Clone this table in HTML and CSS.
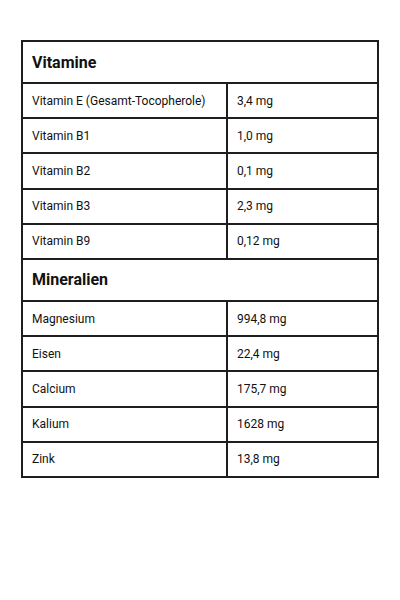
FILE: index.html
```html
<!DOCTYPE html>
<html lang="de">
<head>
<meta charset="utf-8">
<link rel="stylesheet" href="styles.css">
</head>
<body>
<div class="page">
<table class="nutri">
  <tr class="head"><th colspan="2">Vitamine</th></tr>
  <tr><td class="name">Vitamin E (Gesamt-Tocopherole)</td><td>3,4 mg</td></tr>
  <tr><td class="name">Vitamin B1</td><td>1,0 mg</td></tr>
  <tr><td class="name">Vitamin B2</td><td>0,1 mg</td></tr>
  <tr><td class="name">Vitamin B3</td><td>2,3 mg</td></tr>
  <tr><td class="name">Vitamin B9</td><td>0,12 mg</td></tr>
  <tr class="head"><th colspan="2">Mineralien</th></tr>
  <tr><td class="name">Magnesium</td><td>994,8 mg</td></tr>
  <tr><td class="name">Eisen</td><td>22,4 mg</td></tr>
  <tr><td class="name">Calcium</td><td>175,7 mg</td></tr>
  <tr><td class="name">Kalium</td><td>1628 mg</td></tr>
  <tr><td class="name">Zink</td><td>13,8 mg</td></tr>
</table>
</div>
</body>
</html>
```
FILE: styles.css
```css
html, body {
  margin: 0;
  padding: 0;
  background: #fff;
}
.page {
  padding: 40px 21px;
  font-family: Roboto, "Liberation Sans", sans-serif;
  color: #111;
}
.nutri {
  width: 358px;
  border-collapse: collapse;
}
.nutri th, .nutri td {
  border: 2px solid #1e1e1e;
  text-align: left;
  padding: 0 9px;
}
.nutri th {
  height: 40px;
  font-size: 16px;
  font-weight: 700;
}
.nutri td {
  height: 33.2px;
  font-size: 12px;
  font-weight: 400;
}
.nutri td.name {
  width: 185px;
}
```
